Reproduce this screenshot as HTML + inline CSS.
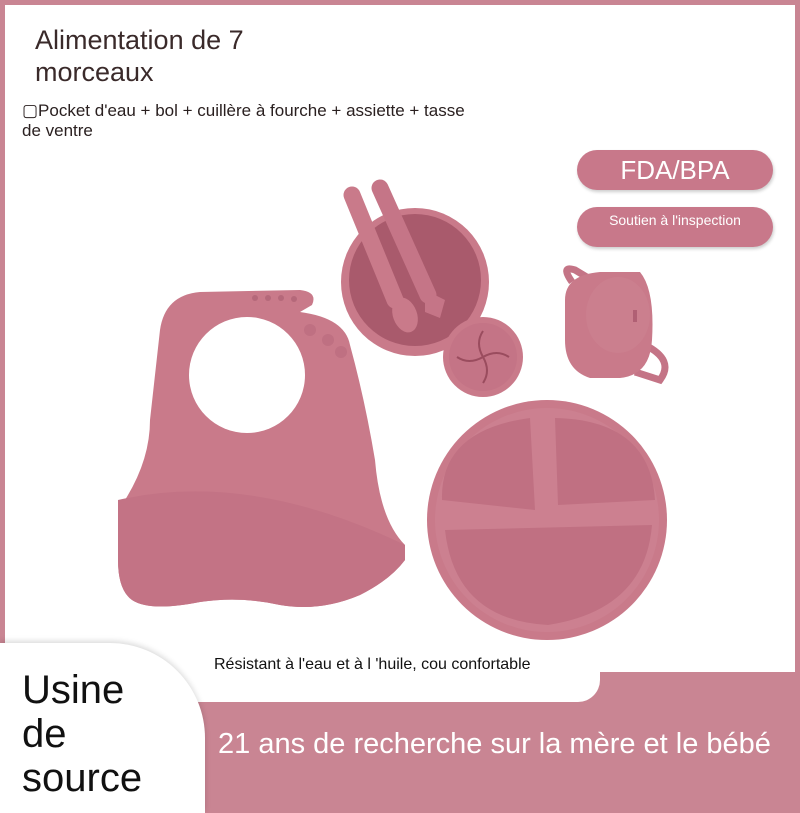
<!DOCTYPE html>
<html><head><meta charset="utf-8"><style>
*{margin:0;padding:0;box-sizing:border-box}
body{width:800px;height:800px;overflow:hidden;background:#c98593;position:relative;font-family:"Liberation Sans Narrow","Liberation Sans",sans-serif}
.main{position:absolute;left:5px;top:5px;width:790px;height:667px;background:#fff}
.cap{position:absolute;left:150px;top:640px;width:450px;height:62px;background:#fff;border-radius:0 0 22px 0}
.blob{position:absolute;left:0;top:643px;width:205px;height:170px;background:#fff;border-radius:0 95px 0 0;box-shadow:0 -2px 6px rgba(0,0,0,.15)}
.t{position:absolute;white-space:nowrap}
.btn{position:absolute;left:577px;width:196px;height:40px;border-radius:20px;background:#c8788a;color:#fff;text-align:center;box-shadow:1px 2px 3px rgba(0,0,0,.2)}
</style></head><body>
<div class="main"></div>
<div class="cap"></div>
<div class="blob"></div>
<div class="t" style="left:35px;top:24px;font-size:27px;color:#3a2a2a;line-height:32px">Alimentation de 7<br>morceaux</div>
<div class="t" style="left:22px;top:101px;font-size:17px;color:#2a2020;line-height:20px">&#9634;Pocket d'eau + bol + cuillère à fourche + assiette + tasse<br>de ventre</div>
<div class="btn" style="top:150px;font-size:26px;line-height:40px">FDA/BPA</div>
<div class="btn" style="top:207px;font-size:14px;line-height:26px">Soutien à l'inspection</div>
<svg style="position:absolute;left:0;top:0" width="800" height="800">
<!-- bib -->
<path d="M160 330 Q165 295 200 292 L300 290 Q318 292 312 305 L300 312 Q345 318 350 345 Q365 400 375 460 Q380 520 405 545 L405 560 Q390 580 360 595 Q320 612 280 605 Q240 596 200 602 Q150 612 132 600 Q118 590 118 560 L125 500 Q150 460 150 420 Z" fill="#c97a8a"/>
<path d="M118 500 Q250 470 405 545 L405 560 Q390 580 360 595 Q320 612 280 605 Q240 596 200 602 Q150 612 132 600 Q118 590 118 560 Z" fill="#c37385"/>
<circle cx="247" cy="375" r="58" fill="#fff"/>
<g fill="#b5687a"><circle cx="255" cy="298" r="3"/><circle cx="268" cy="298" r="3"/><circle cx="281" cy="298" r="3"/><circle cx="294" cy="299" r="3"/></g>
<g fill="#bf7082"><circle cx="310" cy="330" r="6"/><circle cx="328" cy="340" r="6"/><circle cx="341" cy="352" r="6"/></g>
<!-- bowl -->
<circle cx="415" cy="282" r="74" fill="#c97a8a"/>
<circle cx="415" cy="280" r="66" fill="#a95a6c"/>
<path d="M352 195 L395 300" stroke="#c97a8a" stroke-width="17" stroke-linecap="round"/>
<ellipse cx="405" cy="315" rx="12" ry="18" transform="rotate(-20 405 315)" fill="#c97a8a"/>
<path d="M380 188 L428 295" stroke="#c57587" stroke-width="17" stroke-linecap="round"/>
<path d="M425 290 L445 300 L440 318 L425 312 Z" fill="#c57587"/>
<!-- snack cup -->
<circle cx="483" cy="357" r="40" fill="#c97a8a"/>
<circle cx="483" cy="357" r="34" fill="#c47486"/>
<g stroke="#9a4c5e" stroke-width="2" fill="none"><path d="M483 357 q-8 -14 0 -26"/><path d="M483 357 q14 -8 26 0"/><path d="M483 357 q8 14 0 26"/><path d="M483 357 q-14 8 -26 0"/></g>
<!-- cup -->
<path d="M572 282 Q560 265 575 270 L600 285" stroke="#c47486" stroke-width="7" fill="none"/>
<path d="M645 345 Q675 360 660 380 L635 372" stroke="#c47486" stroke-width="7" fill="none"/>
<path d="M565 300 Q565 275 600 272 L640 272 Q655 290 652 340 Q650 375 620 378 L590 378 Q565 370 565 340 Z" fill="#c97a8a"/>
<ellipse cx="618" cy="315" rx="32" ry="38" fill="#cb7f8e"/>
<rect x="633" y="310" width="4" height="12" fill="#b06074"/>
<!-- plate -->
<circle cx="547" cy="520" r="120" fill="#c97a8a"/>
<circle cx="547" cy="520" r="112" fill="#cc8090"/>
<path d="M442 500 Q440 430 530 418 L535 510 Z" fill="#c07082"/>
<path d="M555 418 Q650 420 655 500 L558 505 Z" fill="#c07082"/>
<path d="M445 530 L652 525 Q645 610 548 625 Q455 620 445 530 Z" fill="#c07082"/>
</svg>
<div class="t" style="left:214px;top:656px;font-size:16px;color:#111">Résistant à l'eau et à l 'huile, cou confortable</div>
<div class="t" style="left:218px;top:728px;font-size:29px;color:#fff">21 ans de recherche sur la mère et le bébé</div>
<div class="t" style="left:22px;top:668px;font-size:40px;color:#111;line-height:44px">Usine<br>de<br>source</div>
</body></html>
